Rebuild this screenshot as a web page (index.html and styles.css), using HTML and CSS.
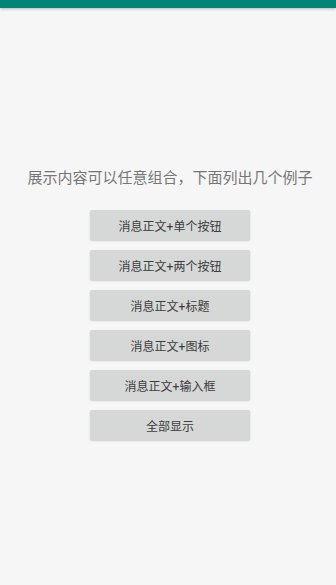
FILE: index.html
```html
<!DOCTYPE html>
<html lang="zh">
<head>
<meta charset="utf-8">
<link rel="stylesheet" href="styles.css">
</head>
<body>
<div class="statusbar"></div>
<main class="content">
  <p class="intro">展示内容可以任意组合，下面列出几个例子</p>
  <div class="buttons">
    <button class="btn">消息正文+单个按钮</button>
    <button class="btn">消息正文+两个按钮</button>
    <button class="btn">消息正文+标题</button>
    <button class="btn">消息正文+图标</button>
    <button class="btn">消息正文+输入框</button>
    <button class="btn">全部显示</button>
  </div>
</main>
</body>
</html>
```
FILE: styles.css
```css
html, body {
  margin: 0;
  padding: 0;
  background: #f6f6f6;
  font-family: "Roboto", "Noto Sans CJK SC", sans-serif;
}
body {
  width: 336px;
  height: 585px;
  overflow: hidden;
}
.statusbar {
  height: 8px;
  background: #008577;
  box-shadow: 0 1px 3px rgba(0,0,0,0.25);
  position: relative;
}
.content {
  display: flex;
  flex-direction: column;
  align-items: center;
  padding-top: 160px;
  padding-left: 4px;
}
.intro {
  margin: 0;
  font-size: 15px;
  line-height: 20px;
  color: #767676;
  white-space: nowrap;
}
.buttons {
  margin-top: 22px;
  display: flex;
  flex-direction: column;
  gap: 10px;
}
.btn {
  width: 160px;
  height: 30px;
  border: none;
  border-radius: 2px;
  background: #d6d7d7;
  box-shadow: 0 1px 2px rgba(0,0,0,0.18);
  font-family: "Roboto", "Noto Sans CJK SC", sans-serif;
  font-size: 12px;
  color: #3c3c3c;
  padding: 0;
}
```
